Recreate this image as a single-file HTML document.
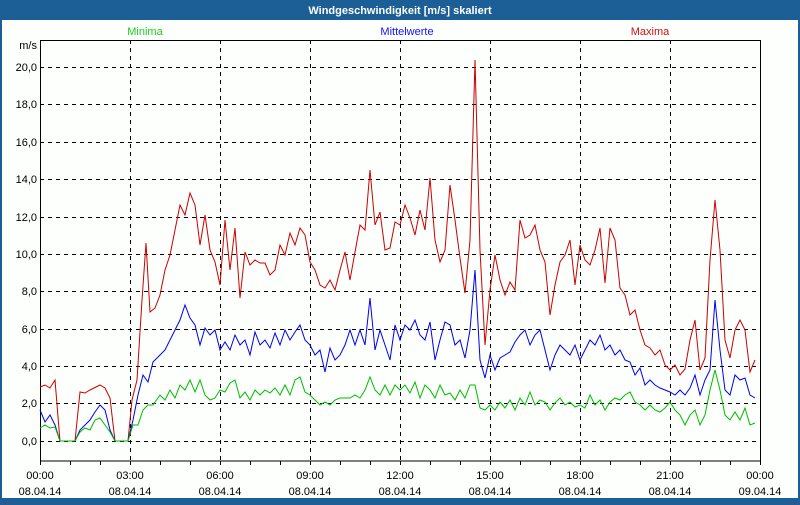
<!DOCTYPE html><html><head><meta charset="utf-8"><style>
body{margin:0;width:800px;height:500px;overflow:hidden;background:#1c5f96;font-family:"Liberation Sans",sans-serif}
</style></head><body>
<svg width="800" height="500" xmlns="http://www.w3.org/2000/svg" font-family="Liberation Sans, sans-serif" font-size="11">
<rect x="0" y="0" width="800" height="500" fill="#1c5f96"/>
<rect x="2" y="20" width="796" height="478" fill="#fcfffc"/>
<text x="400" y="14" fill="#fff" font-weight="bold" text-anchor="middle" font-size="11">Windgeschwindigkeit [m/s] skaliert</text>
<text x="145" y="35" fill="#22cc22" text-anchor="middle">Minima</text>
<text x="407" y="35" fill="#1010ff" text-anchor="middle">Mittelwerte</text>
<text x="650" y="35" fill="#cc1111" text-anchor="middle">Maxima</text>
<g stroke="#000" stroke-dasharray="4,4" stroke-width="1">
<path d="M40 441.5H760M40 403.5H760M40 366.5H760M40 329.5H760M40 291.5H760M40 254.5H760M40 217.5H760M40 179.5H760M40 142.5H760M40 104.5H760M40 67.5H760"/>
<path d="M130.5 40V461M220.5 40V461M310.5 40V461M400.5 40V461M490.5 40V461M580.5 40V461M670.5 40V461"/>
</g>
<rect x="40.5" y="40.5" width="720" height="420.5" fill="none" stroke="#000"/>
<g stroke="#000"><path d="M40.5 461v4M70.5 461v4M100.5 461v4M130.5 461v4M160.5 461v4M190.5 461v4M220.5 461v4M250.5 461v4M280.5 461v4M310.5 461v4M340.5 461v4M370.5 461v4M400.5 461v4M430.5 461v4M460.5 461v4M490.5 461v4M520.5 461v4M550.5 461v4M580.5 461v4M610.5 461v4M640.5 461v4M670.5 461v4M700.5 461v4M730.5 461v4M760.5 461v4"/></g>
<g fill="#000" text-anchor="end">
<text x="37" y="49">m/s</text>
<text x="37" y="71">20,0</text><text x="37" y="108">18,0</text><text x="37" y="146">16,0</text><text x="37" y="183">14,0</text><text x="37" y="221">12,0</text><text x="37" y="258">10,0</text><text x="37" y="295">8,0</text><text x="37" y="333">6,0</text><text x="37" y="370">4,0</text><text x="37" y="407">2,0</text><text x="37" y="445">0,0</text>
</g>
<g fill="#000" text-anchor="middle">
<text x="40" y="479">00:00</text><text x="40" y="495">08.04.14</text>
<text x="130" y="479">03:00</text><text x="130" y="495">08.04.14</text>
<text x="220" y="479">06:00</text><text x="220" y="495">08.04.14</text>
<text x="310" y="479">09:00</text><text x="310" y="495">08.04.14</text>
<text x="400" y="479">12:00</text><text x="400" y="495">08.04.14</text>
<text x="490" y="479">15:00</text><text x="490" y="495">08.04.14</text>
<text x="580" y="479">18:00</text><text x="580" y="495">08.04.14</text>
<text x="670" y="479">21:00</text><text x="670" y="495">08.04.14</text>
<text x="760" y="479">00:00</text><text x="760" y="495">09.04.14</text>
</g>
<polyline fill="none" stroke="#cc0000" points="40,387 45,385 50,388 55,380 60,441 75,441 80,392 85,393 90,390 100,385 105,388 110,398 115,441 128,441 132,400 137,380 142,300 146,243 150,312 155,308 160,295 165,270 170,255 175,230 180,205 185,215 190,193 195,205 200,245 205,215 210,250 215,262 220,285 225,220 230,270 235,228 240,298 245,252 250,265 255,260 260,263 265,263 270,275 275,270 280,245 285,255 290,233 295,245 300,228 305,235 310,262 315,270 320,285 325,288 330,280 335,290 340,270 345,252 350,280 355,252 360,225 365,230 370,170 375,225 380,212 385,250 390,248 395,222 400,225 405,205 410,218 415,235 420,210 425,230 430,178 435,240 440,262 445,250 450,185 455,220 460,258 465,293 470,240 475,60 480,250 485,345 490,290 495,255 500,280 505,295 510,282 515,290 520,220 525,238 530,235 535,225 540,250 545,262 550,315 555,285 560,262 565,255 570,240 575,285 580,245 585,260 590,265 595,250 600,228 605,283 610,228 615,240 620,288 625,295 630,315 635,310 640,330 645,345 650,348 655,355 660,350 665,365 670,370 675,365 680,375 685,369 690,340 695,320 700,370 705,358 710,260 715,200 720,250 725,340 730,358 735,330 740,320 745,330 750,372 755,360"/>
<polyline fill="none" stroke="#0000ee" points="40,410 45,422 50,415 55,425 60,441 75,441 80,430 85,425 90,420 95,412 100,405 105,410 110,430 115,441 128,441 133,420 138,395 143,375 148,382 153,362 160,355 165,350 170,340 175,330 180,320 185,305 190,318 195,325 200,345 205,328 210,335 215,330 220,350 225,342 230,350 235,335 240,345 245,340 250,355 255,332 260,345 265,340 270,348 275,333 280,345 285,330 290,340 295,332 300,325 305,340 310,345 315,355 320,350 325,372 330,348 335,360 340,355 345,345 350,330 355,345 360,330 365,345 370,298 375,350 380,330 385,345 390,360 395,325 400,340 405,325 410,330 415,320 420,335 425,340 430,322 435,360 440,340 445,322 450,325 455,345 460,340 465,358 470,330 475,270 480,360 485,378 490,355 495,370 500,358 505,355 510,352 515,342 520,335 525,330 530,345 535,335 540,330 545,350 550,370 555,355 560,345 565,350 570,355 575,345 580,360 585,350 590,340 595,345 600,335 605,350 610,345 615,355 620,350 625,360 630,362 635,375 640,368 645,385 650,380 655,385 660,388 665,390 670,392 675,395 680,390 685,395 690,388 695,375 700,395 705,380 710,370 715,300 720,350 725,390 730,395 735,375 740,380 745,378 750,395 755,398"/>
<polyline fill="none" stroke="#00bb00" points="40,428 45,425 50,428 55,427 60,441 75,441 80,432 85,428 90,430 95,420 100,418 105,425 110,432 115,441 128,441 133,425 138,425 143,410 148,405 153,405 160,395 165,400 170,390 175,398 180,385 185,390 190,380 195,392 200,380 205,395 210,400 215,398 220,390 225,392 230,383 235,380 240,398 245,392 250,400 255,390 260,395 265,390 270,393 275,388 280,395 285,385 290,395 295,380 300,377 305,392 310,395 315,400 320,405 325,402 330,405 335,400 340,398 345,398 350,398 355,395 360,398 365,390 370,377 375,390 380,395 385,385 390,395 395,385 400,390 405,385 410,393 415,382 420,398 425,385 430,390 435,398 440,385 445,395 450,393 455,400 460,390 465,398 470,385 475,385 480,408 485,410 490,405 495,410 500,402 505,408 510,400 515,410 520,398 525,405 530,392 535,405 540,400 545,402 550,410 555,403 560,398 565,405 570,402 575,407 580,405 585,408 590,395 595,405 600,400 605,410 610,402 615,398 620,400 625,395 630,392 635,402 640,405 645,410 650,405 655,410 660,412 665,408 670,402 675,410 680,415 685,425 690,415 695,410 700,425 705,415 710,390 715,370 720,390 725,415 730,420 735,412 740,420 745,408 750,425 755,423"/>
</svg>
</body></html>
